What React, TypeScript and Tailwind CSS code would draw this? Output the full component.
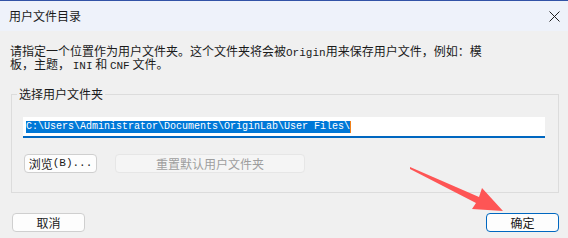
import React from 'react'

const cjk = { fontFamily: '"Noto Sans CJK SC", "Noto Sans", sans-serif' }

const Mono = ({ children }: { children: React.ReactNode }) => (
  <span className="font-['Liberation_Mono',monospace] text-[11px] leading-none">{children}</span>
)

const WinButton = ({
  children,
  className = '',
  disabled = false,
  primary = false,
}: {
  children: React.ReactNode
  className?: string
  disabled?: boolean
  primary?: boolean
}) => (
  <button
    disabled={disabled}
    className={
      'h-[19px] rounded-[4px] text-[12px] leading-none flex items-center justify-center ' +
      (disabled
        ? 'border border-[#e6e6e6] bg-[#f5f5f5] text-[#9e9e9e] '
        : primary
          ? 'border-[1.5px] border-[#0067c0] bg-[#fdfdfd] text-[#1a1a1a] '
          : 'border border-[#cfcfcf] bg-[#fdfdfd] text-[#1a1a1a] ') +
      className
    }
  >
    {children}
  </button>
)

export default function App() {
  return (
    <div
      className="relative w-[568px] h-[238px] overflow-hidden bg-[#f0f0f0] text-[#1a1a1a]"
      style={cjk}
    >
      <div className="h-[1px] bg-[#3253a6]" />
      <div className="h-[30px] bg-[#eef2fa] flex items-center justify-between pl-[9px] pr-[8px]">
        <span className="text-[12px] leading-none">用户文件目录</span>
        <svg width="11" height="11" viewBox="0 0 11 11">
          <path d="M0.5 0.5 L10.5 10.5 M10.5 0.5 L0.5 10.5" stroke="#1f1f1f" strokeWidth="1" />
        </svg>
      </div>

      <div className="mt-[13px] pl-[10px] text-[12px]">
        <div className="h-[13px] leading-[13px] whitespace-nowrap">
          请指定一个位置作为用户文件夹。这个文件夹将会被<Mono>Origin</Mono>用来保存用户文件，例如：模
        </div>
        <div className="h-[13px] leading-[13px] whitespace-nowrap">
          板，主题， <Mono>INI</Mono> 和 <Mono>CNF</Mono> 文件。
        </div>
      </div>

      <fieldset className="ml-[11px] mt-[17px] w-[548px] border border-[#dcdcdc] pl-[11px] pr-[13px] pt-[16px] pb-[19px]">
        <legend className="-ml-[6px] px-[2px] text-[12px] leading-[14px]">选择用户文件夹</legend>
        <div className="h-[21px] w-[522px] bg-white border-b-2 border-[#0067c0] flex items-center pl-[3px]">
          <span className="bg-[#0078d7] text-white font-['Liberation_Mono',monospace] text-[10px] leading-[12px] whitespace-pre">
            C:\Users\Administrator\Documents\OriginLab\User Files\
          </span>
          <span className="w-[1px] h-[12px] bg-[#f0801a]" />
        </div>
        <div className="mt-[16px] ml-[1px] flex gap-[18px]">
          <WinButton className="w-[73px]">
            浏览<Mono>(B)...</Mono>
          </WinButton>
          <WinButton disabled className="w-[190px]">
            重置默认用户文件夹
          </WinButton>
        </div>
      </fieldset>

      <div className="mt-[20px] pl-[12px] pr-[9px] flex justify-between">
        <WinButton className="w-[73px]">取消</WinButton>
        <WinButton primary className="w-[73px]">
          确定
        </WinButton>
      </div>

      <svg
        className="absolute left-0 top-0 pointer-events-none"
        width="568"
        height="238"
        viewBox="0 0 568 238"
      >
        <polygon
          points="410,167 479,197 482,188 503,211 472,209 476,203 410,169"
          fill="#fe5555"
        />
      </svg>
    </div>
  )
}
